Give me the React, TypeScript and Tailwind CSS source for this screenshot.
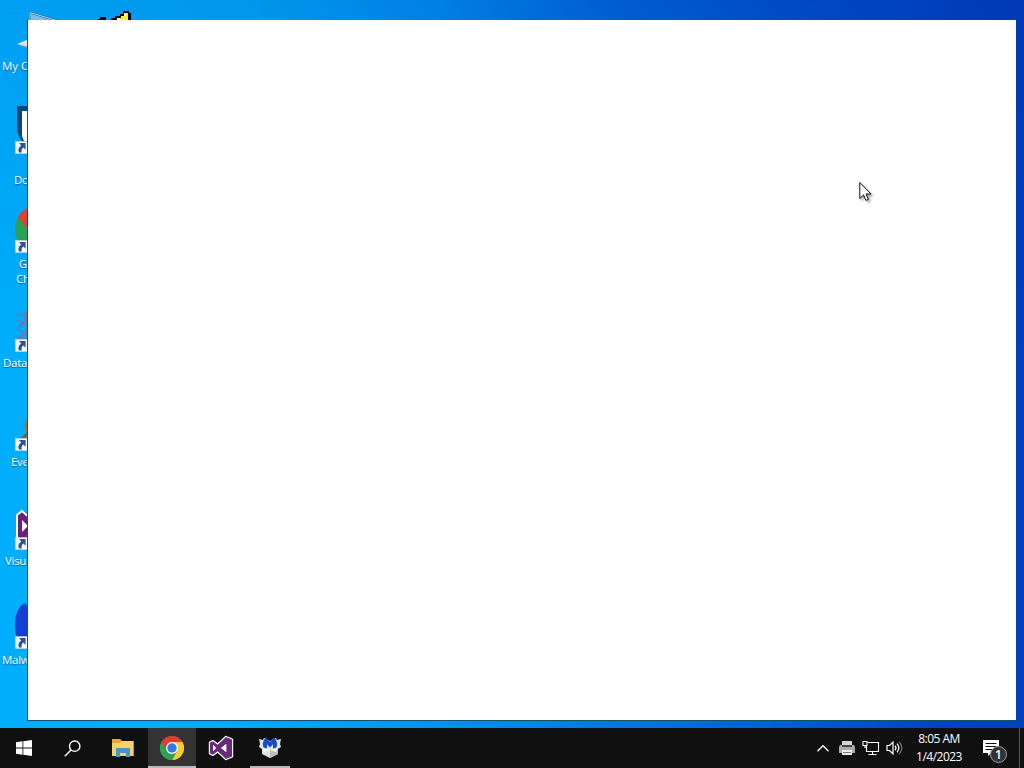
import type { ReactNode } from "react";

const Shortcut = () => (
  <g>
    <rect x="0.5" y="35.5" width="14" height="12" fill="#f4f8fc" stroke="#c5d6e6" strokeWidth="0.6" />
    <path d="M4 37h6.6v6.8L8.4 41.6C6.6 43 6.2 44.4 6.8 46.6H4C2.6 43.6 3.6 41.4 6.2 39.4z" fill="#32528f" />
  </g>
);

interface DesktopIconProps {
  className: string;
  labelClass: string;
  label: string;
  children: ReactNode;
}

const DesktopIcon = ({ className, labelClass, label, children }: DesktopIconProps) => (
  <div className={`absolute left-0 w-[28px] overflow-hidden ${className}`}>
    <svg width="48" height="49" viewBox="0 0 48 49" className="ml-[15px] max-w-none">
      {children}
    </svg>
    <div
      className={`whitespace-pre text-[11.5px] leading-[15px] tracking-[-0.3px] text-white [text-shadow:0_1px_1px_#0057a0] ${labelClass}`}
    >
      {label}
    </div>
  </div>
);

const ChromeLogo = () => (
  <svg width="24" height="24" viewBox="0 0 48 48">
    <circle cx="24" cy="24" r="24" fill="#2fa14f" />
    <path d="M24 24 3.2 12A24 24 0 0 1 44.8 12z" fill="#e33b2e" />
    <path d="M24 12H44.8A24 24 0 0 1 24 48L34.4 30z" fill="#fccb2f" />
    <path d="M3.2 12 13.6 30 24 24 24 12z" fill="#e33b2e" />
    <path d="M3.2 12 13.6 30Q17 36 24 36l10.4-6L24 48A24 24 0 0 1 3.2 12z" fill="#2fa14f" />
    <circle cx="24" cy="24" r="12" fill="#fff" />
    <circle cx="24" cy="24" r="9.5" fill="#3279e8" />
  </svg>
);

const VisualStudioLogo = () => (
  <svg width="26" height="26" viewBox="0 0 26 26">
    <path
      d="M18 2 24 4.5v17L18 24 9.6 16.2 5 19.8 2 18.5v-11L5 6.2l4.6 3.6zM18.2 9 13.2 13l5 4zM5 10v6l3-3z"
      fill="#682a7b"
      fillRule="evenodd"
      stroke="#fff"
      strokeWidth="2.4"
      strokeLinejoin="round"
      paintOrder="stroke"
    />
    <path d="M18.2 9 13.2 13l5 4zM5 10v6l3-3z" fill="#fff" />
  </svg>
);

const MalwarebytesLogo = () => (
  <svg width="24" height="24" viewBox="0 0 24 24">
    <path d="m1 3 4 1 1-2 6 3 6-3 1 2 4-1-1 5 1 3-3 2v5l-8 4-8-4v-5l-3-2 1-3z" fill="#dfe4e6" />
    <path d="m12 14 8-3v7l-8 4z" fill="#b9bec0" />
    <path d="m4 11 8 3 8-3-2 5-6-2-6 2z" fill="#f8fafa" />
    <path d="M5.5 11.5C4 8 5.5 3 8.4 1.6L12 6l3.6-4.4C18.5 3 20 8 18.5 11.5L15 12.6V8.2l-3 3.4-3-3.4v4.4z" fill="#174bc9" />
  </svg>
);

const Desktop = () => (
  <>
    <svg width="28" height="11" viewBox="0 0 28 11" className="absolute left-[29px] top-[11px]">
      <path d="M1 9V1.5L26 9z" fill="#79bdf0" />
      <path d="M1 9V1.5L26 9" fill="none" stroke="#155c91" strokeWidth="2" />
      <path d="M1 9V1.5L26 9" fill="none" stroke="#b9e1f7" strokeWidth="1" />
    </svg>
    <svg width="36" height="10" viewBox="0 0 36 10" className="absolute left-[97px] top-[10px]">
      <path d="M3 7h6v3H1V9h2zM14 8h4V6h5V4h3V1h6v2h2v7H14z" fill="#050505" />
      <path d="M20 10V8h4V6h3V3h4v7z" fill="#f8ee36" />
      <path d="M27 4h2v2h-2zM20 8h3v2h-3z" fill="#fff" />
    </svg>
    <svg width="12" height="9" viewBox="0 0 12 9" className="absolute left-[17px] top-[39px]">
      <path d="M0 5 12 0v9z" fill="#d9e4e7" />
      <path d="m0 5 12 3v1z" fill="#7793a0" />
    </svg>
    <div className="absolute left-0 top-[58px] w-[28px] overflow-hidden whitespace-pre pl-[2px] text-[11.5px] leading-[15px] text-white [text-shadow:0_1px_1px_#0057a0]">
      My C
    </div>

    <DesktopIcon className="top-[106px]" labelClass="pl-[14px] pt-[17px]" label="Do">
      <path d="M2 0h44v20C46 34 36 42 24 48 12 42 2 34 2 20z" fill="#064871" />
      <path d="M7 5h34v30H9L7 30z" fill="#fff" />
      <Shortcut />
    </DesktopIcon>
    <DesktopIcon className="top-[205px]" labelClass="pl-[16px] pt-[2px]" label={" G\nCh"}>
      <circle cx="24" cy="24" r="24" fill="#2ca052" />
      <path d="M3 12A24 24 0 0 1 24 0v38z" fill="#e43d30" />
      <Shortcut />
    </DesktopIcon>
    <DesktopIcon className="top-[304px]" labelClass="pl-[3px] pt-[2px]" label="Data">
      <path
        d="M2 11h12M11 8v10M12 12v22M2 16l7 3-7 6 8 5-8 4M4 22l8-5M2 34h8"
        fill="none"
        stroke="#a85b86"
        strokeWidth="1"
      />
      <Shortcut />
    </DesktopIcon>
    <DesktopIcon className="top-[403px]" labelClass="pl-[11px] pt-[2px]" label="Eve">
      <circle cx="23" cy="23" r="13" fill="#b96a14" />
      <path d="m13 30-7 7" stroke="#8c5a22" strokeWidth="3" />
      <Shortcut />
    </DesktopIcon>
    <DesktopIcon className="top-[502px]" labelClass="pl-[5px] pt-[2px]" label="Visu">
      <path d="M2 13 7 9l12 11v10L7 40l-5-3z" fill="#68217a" stroke="#fff" strokeWidth="2" />
      <path d="M7 18v12l6-6z" fill="#fff" />
      <Shortcut />
    </DesktopIcon>
    <DesktopIcon className="top-[601px]" labelClass="pl-[2px] pt-[2px]" label="Malw">
      <path d="M2 38C-2 25-1 8 10 2l10 16v22z" fill="#143fd0" />
      <Shortcut />
    </DesktopIcon>
  </>
);

const Cursor = () => (
  <svg
    width="16"
    height="22"
    viewBox="0 0 16 22"
    className="absolute left-[831px] top-[161px] [filter:drop-shadow(2px_2px_1px_rgba(0,0,0,0.35))]"
  >
    <path
      d="M.8 1.5v16l3.7-3.6 2.4 5.5 2.5-1.1L7 13h5z"
      fill="#fff"
      stroke="#111"
      strokeWidth="1"
    />
  </svg>
);

const Tray = () => (
  <div className="ml-auto flex h-full items-center">
    <svg width="14" height="9" viewBox="0 0 14 9" className="mr-[9px]">
      <path d="m1.5 7.2 5.5-5.5 5.5 5.5" fill="none" stroke="#fff" strokeWidth="1.3" />
    </svg>
    <svg width="16" height="16" viewBox="0 0 16 16" className="mr-[7px]">
      <path d="M3 1h10v4H3z" fill="#d5d5d5" />
      <path d="M1 5h14l1 2v6H0V7z" fill="#aaa" />
      <path d="M3 5h10v2H3z" fill="#444" />
      <path d="M3 10h10v5H3z" fill="#eee" />
      <path d="M4 12.5h8" stroke="#777" />
    </svg>
    <svg width="18" height="16" viewBox="0 0 18 16" className="mr-[6px]" fill="none" stroke="#fff" strokeWidth="1.1">
      <path d="M6 2.5h10.5v9H4.5V6M10.5 11.5v3M6.5 14.5h8" />
      <path d="M1 1.5h4v4H1zM3 5.5v2h1.5" />
    </svg>
    <svg width="17" height="16" viewBox="0 0 17 16" className="mr-[11px]" fill="none" stroke="#fff" strokeWidth="1.2">
      <path d="M1 5.5h2.5L7 2.2v11.6l-3.5-3.3H1z" />
      <path d="M9 5.7q2 2.3 0 4.6M11 3.7q3.7 4.3 0 8.6" />
      <path d="M13.2 1.8q5.3 6.2 0 12.4" stroke="#777" />
    </svg>
    <div className="flex w-[50px] flex-col items-center whitespace-nowrap text-[12px] leading-[18px] tracking-[-0.5px] text-white">
      <span>8:05 AM</span>
      <span>1/4/2023</span>
    </div>
    <div className="relative ml-[16px] h-10 w-[39px]">
      <svg width="18" height="18" viewBox="0 0 18 18" className="ml-[3px] mt-[12px]">
        <path d="M0 0h16v13H8l-3 3v-3H0z" fill="#fff" />
        <path d="M2.5 3.5h11M2.5 6.5h11M2.5 9.5h8" stroke="#111" strokeWidth="1.2" />
      </svg>
      <div className="absolute left-[10px] top-[18px] flex h-[17px] w-[17px] items-center justify-center rounded-full border border-[#999] bg-[#333] text-[12px] font-semibold leading-none text-white">
        1
      </div>
    </div>
  </div>
);

const Taskbar = () => (
  <div className="flex h-10 items-center bg-[#101010]">
    <div className="flex w-12 justify-center">
      <svg width="16" height="16" viewBox="0 0 16 16" fill="#fff">
        <path d="m0 2.2 6.5-.9v6.2H0zM7.3 1.2 16 0v7.5H7.3zM0 8.4h6.5v6.3L0 13.8zM7.3 8.4H16V16l-8.7-1.2z" />
      </svg>
    </div>
    <div className="flex w-12 justify-center">
      <svg width="17" height="17" viewBox="0 0 17 17" fill="none" stroke="#fff" strokeWidth="1.4">
        <circle cx="10.7" cy="6.2" r="5.2" />
        <path d="m7 10-6.2 6.2" />
      </svg>
    </div>
    <div className="ml-[2px] flex w-[50px] justify-center">
      <svg width="22" height="18" viewBox="0 0 22 18">
        <path d="M0 0h8l2 2h11.5v15H0z" fill="#e9a928" />
        <path d="M0 4h8l2-2h11.5v15H0z" fill="#fad167" />
        <path d="M4 18V9h14v9h-4v-4H8v4z" fill="#4497cf" />
      </svg>
    </div>
    <div className="flex h-full w-12 flex-col items-center border-b-2 border-[#b9b9b9] bg-[#333] pt-[8px]">
      <ChromeLogo />
    </div>
    <div className="ml-[1px] flex w-12 justify-center">
      <VisualStudioLogo />
    </div>
    <div className="ml-[5px] flex h-full w-10 flex-col items-center border-b-2 border-[#b9b9b9] pt-[8px]">
      <MalwarebytesLogo />
    </div>
    <Tray />
    <div className="h-full w-[5px] border-l border-[#555]" />
  </div>
);

export default function App() {
  return (
    <div className="flex h-[768px] w-[1024px] flex-col overflow-hidden font-['Open_Sans','Noto_Sans',sans-serif]">
      <div className="relative h-[728px] bg-[linear-gradient(90deg,#00aefb_0%,#00acf8_20%,#009aee_38%,#0080e0_55%,#0062d4_75%,#0044c0_92%,#0040bb_100%)]">
        <div className="h-[364px] bg-[linear-gradient(90deg,#009ff3_0%,#0096ec_25%,#0080e4_42%,#0060d2_58%,#004cc6_75%,#003cb8_95%,#003ab5_100%)] [mask-image:linear-gradient(180deg,#000_0%,transparent_100%)]" />
        <Desktop />
        <div className="absolute left-[27px] top-[20px] h-[701px] w-[989px] border-b border-l border-[#14506f] bg-white">
          <Cursor />
        </div>
      </div>
      <Taskbar />
    </div>
  );
}
